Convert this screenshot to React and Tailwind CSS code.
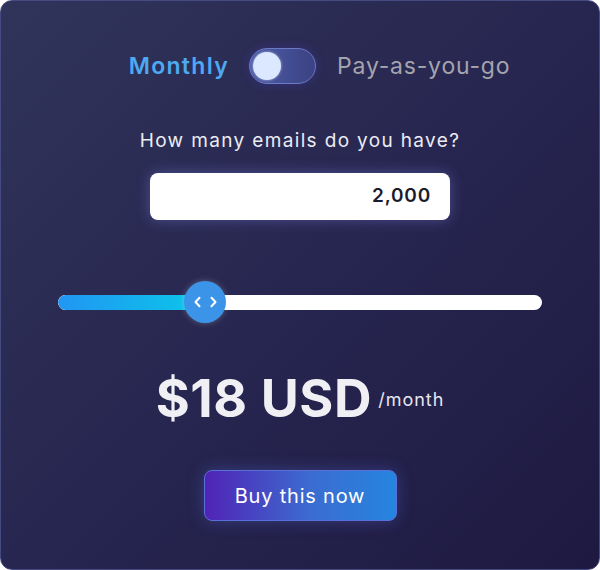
export default function App() {
  return (
    <div className="w-[600px] h-[570px] bg-white">
      <div
        className="w-[600px] h-[570px] rounded-[12px] border border-[#454a80] bg-[linear-gradient(135deg,#30345a_0%,#272650_50%,#1e1941_100%)] flex flex-col items-center font-['Inter',sans-serif]"
      >
        <div className="mt-[47px] ml-[39px] flex items-center h-[36px]">
          <span className="text-[23px] font-semibold text-[#4ea8f2] tracking-[1.3px]">Monthly</span>
          <div className="ml-[20px] w-[67px] h-[36px] rounded-full border border-[#6c79c4] bg-[linear-gradient(90deg,#4d5ca8,#3b4282)] flex items-center px-[3px] shadow-[0_0_10px_rgba(80,60,200,0.35)]">
            <div className="w-[28px] h-[28px] rounded-full bg-[#dce8ff] shadow-[0_0_3px_rgba(255,255,255,0.6)]"></div>
          </div>
          <span className="ml-[21px] text-[23px] text-[#a5a4ae] tracking-[0.8px]">Pay-as-you-go</span>
        </div>

        <div className="mt-[43px] text-[19px] leading-[28px] text-[#ececf2] tracking-[1.35px]">How many emails do you have?</div>

        <div className="mt-[18px] w-[300px] h-[47px] rounded-[8px] bg-white shadow-[0_0_14px_rgba(140,150,255,0.35)] flex items-center justify-end pr-[19px]">
          <span className="text-[19px] font-semibold text-[#1c1b2e] tracking-[0.8px]">2,000</span>
        </div>

        <div className="mt-[61px] w-[484px] h-[42px] relative flex items-center">
          <div className="w-full h-[15px] rounded-full bg-white flex overflow-hidden">
            <div className="w-[150px] h-full bg-[linear-gradient(90deg,#2196f3,#0ac8e8)] rounded-l-full"></div>
          </div>
          <div className="absolute left-[126px] top-0 w-[42px] h-[42px] rounded-full bg-[#3c94e8] flex items-center justify-center gap-[9px] shadow-[0_0_6px_rgba(255,255,255,0.25)]">
            <svg width="7" height="12" viewBox="0 0 7 12" fill="none"><path d="M5.5 1.8 1.5 6 5.5 10.2" stroke="white" strokeWidth="2" strokeLinecap="round" strokeLinejoin="round"/></svg>
            <svg width="7" height="12" viewBox="0 0 7 12" fill="none"><path d="M1.5 1.8 5.5 6 1.5 10.2" stroke="white" strokeWidth="2" strokeLinecap="round" strokeLinejoin="round"/></svg>
          </div>
        </div>

        <div className="mt-[46px] flex items-start">
          <span className="text-[52px] leading-[60px] font-bold text-[#f0f0f4] tracking-[0.6px]">$18 USD</span>
          <span className="ml-[6px] mt-[17px] text-[18px] text-[#e6e6ee] tracking-[1px]">/month</span>
        </div>

        <div className="mt-[41px] w-[193px] h-[51px] rounded-[8px] border border-[#5a6fd8] bg-[linear-gradient(90deg,#5023b6_0%,#3c6cd0_55%,#2585e0_100%)] flex items-center justify-center shadow-[0_0_16px_rgba(90,110,230,0.35)]">
          <span className="text-[20px] text-white tracking-[0.8px]">Buy this now</span>
        </div>
      </div>
    </div>
  );
}
